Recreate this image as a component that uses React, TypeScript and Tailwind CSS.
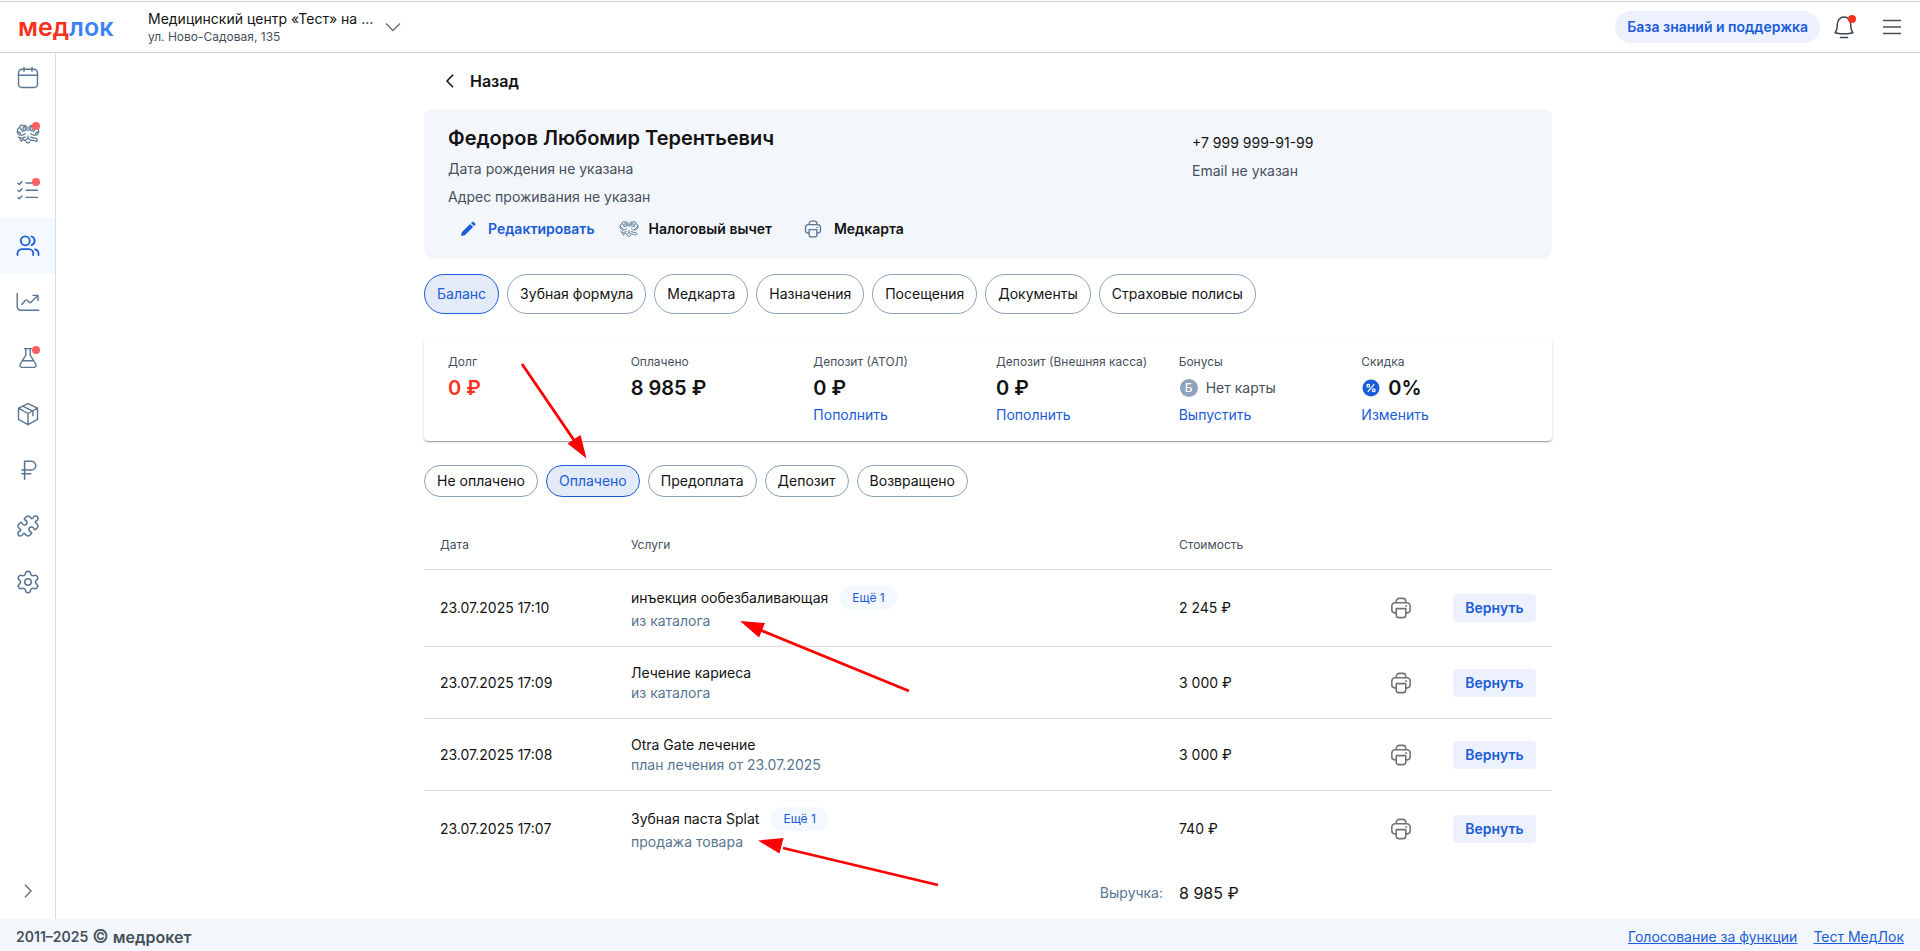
// src/App.tsx
// Patient card: personal data, balance summary and the list of payments.

import { useState, type ReactNode } from 'react'
import { Puzzle, Settings } from 'lucide-react'

function Icon({ children, className = 'size-6', width = 1.4 }: { children: ReactNode; className?: string; width?: number }) {
  return (
    <svg viewBox="0 0 24 24" fill="none" stroke="currentColor" strokeWidth={width} strokeLinecap="round" strokeLinejoin="round" className={className} aria-hidden="true">
      {children}
    </svg>
  )
}

const CalendarIcon = () => (
  <Icon>
    <rect x="2.5" y="3.2" width="19" height="18.3" rx="3.6" />
    <path d="M2.5 9.2h19M8 1.4v3.8M16 1.4v3.8" />
  </Icon>
)

const EagleIcon = ({ className }: { className?: string }) => (
  <Icon className={className} width={1.2}>
    <path d="M11 8.5V5.2L9.3 3.4 7.6 4.2l1.7 1.2v2.4c0 1.6-2.2 1.4-2.2-.2V5.4M13 8.5V5.2l1.7-1.8 1.7.8-1.7 1.2v2.4c0 1.6 2.2 1.4 2.2-.2V5.4" />
    <path d="M7.2 3.3C4.9 2.7 3 3.9 4 5.6l2.5 3.9M4 5.6C1.8 5.7 1 8 1.3 9.8c.4 2.7 2.7 3.8 5.2 3.3 1.2-.2 2-.6 2.8-1.4M1.5 9.2l3.2 2.3" />
    <path d="M16.8 3.3c2.3-.6 4.2.6 3.2 2.3l-2.5 3.9M20 5.6c2.2.1 3 2.4 2.7 4.2-.4 2.7-2.7 3.8-5.2 3.3-1.2-.2-2-.6-2.8-1.4M22.5 9.2l-3.2 2.3" />
    <path d="M12 13.800v2.400M9.200 15.200c-1.300-.2-1.900.8-3 .9-1.600.2-2.200-.8-3.900-.9M3.800 16.200l1.300 3.100 2.200-2.100 1.700 1.600M14.800 15.200c1.300-.2 1.900.8 3 .9 1.600.2 3-.3 3.600 1.500.3 1.300-1.400 2.300-2.300 1.300-.9-1-2.300-.1-3.900-.9M9.500 18.300c.9-1.300 1.800-1.200 2.500-2.100.7.900 1.600.8 2.500 2.100M10.200 19.800c.5 1.600 3.100 1.600 3.600 0" />
  </Icon>
)

const ChecklistIcon = () => (
  <Icon>
    <path d="M2 5.200l1.300 1.200L6 3.600M2 12.400l1.300 1.200L6 10.800M2 19.600l1.300 1.200L6 18M10 5h11.500M10 12.200h11.500M10 19.400h11.500" />
  </Icon>
)

const UsersIcon = () => (
  <Icon width={1.8}>
    <circle cx="9.3" cy="6.8" r="4.5" />
    <path d="M1.500 21v-1.600a4.300 4.300 0 0 1 4.300-4.300h7.100a4.300 4.300 0 0 1 4.300 4.300V21M15.500 2.500a4.500 4.500 0 0 1 0 8.600M19 15.300a4.300 4.300 0 0 1 3.500 4.200V21" />
  </Icon>
)

const ChartIcon = () => (
  <Icon>
    <path d="M1.200 3.500v13.300a3.400 3.400 0 0 0 3.400 3.400h18.200M5.800 14.500l3.700-4.200c.5-.5 1.200-.5 1.700 0l2.100 2c.5.500 1.200.5 1.700 0l6.500-6.500M17 5.400h5v5" />
  </Icon>
)

const FlaskIcon = () => (
  <Icon>
    <path d="M8.500 2.600h7M9.800 2.600v6.600L4.300 18c-1 1.700 0 3.400 1.800 3.400h11.800c1.800 0 2.800-1.700 1.800-3.400l-5.500-8.800V2.600M7 14.800h10" />
  </Icon>
)

const BoxIcon = () => (
  <Icon>
    <path d="M12 1.700l9.500 4.500v11.200L12 22.700l-9.500-5.300V6.200zM2.500 6.200L12 11.500l9.500-5.300M12 11.500v11.200M6.700 4.200l10.200 5v4.600" />
  </Icon>
)

const RubleIcon = () => (
  <Icon width={1.6}>
    <path d="M8.600 21.200V3.200h6.800a4.300 4.300 0 0 1 4.300 4.300v.2a4.300 4.300 0 0 1-4.300 4.300H5.800M5.800 15.800h9" />
  </Icon>
)

const PrinterIcon = ({ className }: { className?: string }) => (
  <Icon className={className} width={1.7}>
    <path d="M6.800 6.300V4.800A3.300 3.300 0 0 1 10.100 1.500h3.800a3.300 3.300 0 0 1 3.300 3.300v1.500M6.800 17.300H5.300A3.300 3.300 0 0 1 2 14V9.900a3.600 3.600 0 0 1 3.600-3.600h12.800A3.600 3.600 0 0 1 22 9.900V14a3.300 3.300 0 0 1-3.300 3.300h-1.500" />
    <path d="M6.800 12.700h10.400v6.800a3 3 0 0 1-3 3H9.800a3 3 0 0 1-3-3zM17.200 9.800h.8" />
  </Icon>
)

const menu = [
  { label: 'Расписание', icon: <CalendarIcon /> },
  { label: 'Налоговые вычеты', icon: <EagleIcon />, dot: true },
  { label: 'Задачи', icon: <ChecklistIcon />, dot: true },
  { label: 'Клиенты', icon: <UsersIcon />, active: true },
  { label: 'Отчёты', icon: <ChartIcon /> },
  { label: 'Лаборатория', icon: <FlaskIcon />, dot: true },
  { label: 'Склад', icon: <BoxIcon /> },
  { label: 'Касса', icon: <RubleIcon /> },
  { label: 'Интеграции', icon: <Puzzle size={24} strokeWidth={1.5} /> },
  { label: 'Настройки', icon: <Settings size={26} strokeWidth={1.4} /> },
]

const tabs = ['Баланс', 'Зубная формула', 'Медкарта', 'Назначения', 'Посещения', 'Документы', 'Страховые полисы']
const filters = ['Не оплачено', 'Оплачено', 'Предоплата', 'Депозит', 'Возвращено']

const payments = [
  { date: '23.07.2025 17:10', name: 'инъекция ообезбаливающая', more: 'Ещё 1', source: 'из каталога', price: '2 245 ₽' },
  { date: '23.07.2025 17:09', name: 'Лечение кариеса', source: 'из каталога', price: '3 000 ₽' },
  { date: '23.07.2025 17:08', name: 'Otra Gate лечение', source: 'план лечения от 23.07.2025', price: '3 000 ₽' },
  { date: '23.07.2025 17:07', name: 'Зубная паста Splat', more: 'Ещё 1', source: 'продажа товара', price: '740 ₽' },
]

function Header() {
  return (
    <header className="relative z-10 -mb-[3px] flex h-[53px] flex-col border-b border-[#c5cfe2] bg-white">
      <div className="mt-px h-px shrink-0 bg-[#d0c8c2]" />
      <div className="flex flex-1 items-center pr-4 pl-[18px]">
        <a href="#" className="w-[130px] text-[25px] leading-8 font-semibold text-[#f8301c]">
          мед<span className="text-[#3c82f6]">лок</span>
        </a>
        <button className="flex items-center gap-3 text-left">
          <span>
            <span className="block text-sm leading-5">Медицинский центр «Тест» на ...</span>
            <span className="block text-xs leading-4 text-[#46505c]">ул. Ново-Садовая, 135</span>
          </span>
          <svg viewBox="0 0 16 10" fill="none" stroke="#6b6f75" strokeWidth="1.4" className="h-2.5 w-4"><path d="M1 1.500l7 7 7-7" /></svg>
        </button>
        <div className="ml-auto flex items-center gap-3">
          <a href="#" className="flex h-8 items-center rounded-full bg-[#ecf1fd] px-3 text-sm font-semibold text-[#1b5cd7]">База знаний и поддержка</a>
          <button aria-label="Уведомления" className="relative size-6">
            <Icon width={1.5}>
              <path d="M3 17.500c2-2.200 2.300-4.500 2.300-8C5.300 5.300 8 2 12 2s6.700 3.300 6.700 7.500c0 3.500.3 5.800 2.300 8-3.500 1.800-14.500 1.800-18 0zM8.500 22.500h7" className="text-[#3c4753]" />
            </Icon>
            <span className="absolute top-0 right-0 size-2 rounded-full bg-[#f8301c]" />
          </button>
          <button aria-label="Меню" className="ml-3 size-6">
            <svg viewBox="0 0 24 24" stroke="#46505c" strokeWidth="1.4" className="size-6"><path d="M3 5.500h18M3 12h18M3 18.500h18" /></svg>
          </button>
        </div>
      </div>
    </header>
  )
}

function Sidebar() {
  return (
    <nav className="flex w-14 shrink-0 flex-col border-r border-[#d9dce2] text-[#587592]">
      {menu.map((m) => (
        <a key={m.label} href="#" aria-label={m.label} className={`flex h-14 items-center justify-center ${m.active ? 'bg-[#f4f8ff] text-[#1b5cd7]' : ''}`}>
          <span className="relative">
            {m.icon}
            {m.dot && <span className="absolute top-0 right-0 size-2 rounded-full bg-[#ff6161]" />}
          </span>
        </a>
      ))}
      <button aria-label="Развернуть" className="mt-auto flex h-14 items-center justify-center">
        <svg viewBox="0 0 8 14" fill="none" stroke="#687078" strokeWidth="1.5" className="h-3.5 w-2"><path d="M1 .8L7 7l-6 6.200" /></svg>
      </button>
    </nav>
  )
}

function Pill({ active, tall, onClick, children }: { active: boolean; tall?: boolean; onClick: () => void; children: ReactNode }) {
  return (
    <button
      onClick={onClick}
      className={`rounded-full border px-3 text-sm ${tall ? 'h-10' : 'h-8'} ${active ? 'border-[#1b5cd7] bg-[#e3eaf8] text-[#1b5cd7]' : 'border-[#8da2bd]'}`}
    >
      {children}
    </button>
  )
}

function PatientCard() {
  return (
    <section className="flex rounded-lg bg-[#f3f6fb] px-6 pt-[15px] pb-[13px]">
      <div className="flex-1">
        <h1 className="mb-[3px] text-xl leading-7 font-semibold">Федоров Любомир Терентьевич</h1>
        <p className="text-sm leading-7 text-[#46505c]">Дата рождения не указана</p>
        <p className="text-sm leading-7 text-[#46505c]">Адрес проживания не указан</p>
        <div className="mt-0.5 flex h-8 items-center text-sm font-semibold">
          <button className="flex items-center gap-3 pl-3 text-[#1b5cd7]">
            <svg viewBox="0 0 16 16" fill="currentColor" className="size-4"><path d="M1 15l.8-3.700 8.300-8.300 3 3-8.300 8.200zM11 2.100l1.100-1.100c.5-.5 1.100-.5 1.500 0l1.500 1.500c.5.5.5 1.100 0 1.500L14 5.100z" /></svg>
            Редактировать
          </button>
          <button className="ml-6 flex items-center gap-2.5">
            <EagleIcon className="size-5 text-[#587592]" />
            Налоговый вычет
          </button>
          <button className="ml-8 flex items-center gap-3">
            <PrinterIcon className="size-[18px] text-[#587592]" />
            Медкарта
          </button>
        </div>
      </div>
      <div className="w-[336px] pt-[5px] text-sm leading-7">
        <p>+7 999 999-91-99</p>
        <p className="text-[#46505c]">Email не указан</p>
      </div>
    </section>
  )
}

function Stat({ label, action, children }: { label: string; action?: string; children: ReactNode }) {
  return (
    <div>
      <p className="text-xs leading-4 text-[#46505c]">{label}</p>
      <div className="mt-1 flex h-7 items-center text-xl font-semibold">{children}</div>
      {action && <button className="mt-[3px] block text-sm leading-5 text-[#1b5cd7]">{action}</button>}
    </div>
  )
}

function Balance() {
  return (
    <section className="mt-6 grid grid-cols-6 rounded pt-4 pr-2 pb-4 pl-6 shadow-[0_2px_1px_-1px_rgba(0,0,0,0.2),0_1px_1px_0_rgba(0,0,0,0.14),0_1px_3px_0_rgba(0,0,0,0.12)]">
      <Stat label="Долг"><span className="text-[#f8301c]">0 ₽</span></Stat>
      <Stat label="Оплачено">8 985 ₽</Stat>
      <Stat label="Депозит (АТОЛ)" action="Пополнить">0 ₽</Stat>
      <Stat label="Депозит (Внешняя касса)" action="Пополнить">0 ₽</Stat>
      <Stat label="Бонусы" action="Выпустить">
        <span className="ml-px flex size-[18px] items-center justify-center rounded-full bg-[#8da2bd] text-xs font-medium text-white">Б</span>
        <span className="ml-2 text-sm font-normal text-[#46505c]">Нет карты</span>
      </Stat>
      <Stat label="Скидка" action="Изменить">
        <svg viewBox="0 0 18 18" className="mr-2 ml-px size-[18px]">
          <circle cx="9" cy="9" r="8.5" fill="#1b5cd7" />
          <g fill="none" stroke="#fff" strokeWidth="1.2"><path d="M12.300 5.200l-6.600 7.600" /><circle cx="6.3" cy="6.8" r="1.4" /><circle cx="11.7" cy="11.2" r="1.4" /></g>
        </svg>
        0%
      </Stat>
    </section>
  )
}

function Payments() {
  return (
    <table className="mt-6 w-full table-fixed border-separate border-spacing-0 text-sm">
      <colgroup>
        <col className="w-[191px]" />
        <col />
        <col className="w-[202px]" />
        <col className="w-[72px]" />
        <col className="w-[115px]" />
      </colgroup>
      <thead>
        <tr className="text-left text-xs text-[#46505c] [&>*]:h-[49px] [&>*]:border-b [&>*]:border-[#dedede] [&>*]:px-4 [&>*]:font-normal">
          <th>Дата</th>
          <th>Услуги</th>
          <th>Стоимость</th>
          <td />
          <td />
        </tr>
      </thead>
      <tbody>
        {payments.map((p) => (
          <tr key={p.date} className="[&>td]:border-[#dedede] [&>td]:px-4 not-last:[&>td]:border-b">
            <td>{p.date}</td>
            <td className="pt-4 pb-[15px]">
              <div className={`flex items-center gap-3 leading-5 ${p.more ? 'mb-px' : ''}`}>
                {p.name}
                {p.more && <button className="h-6 rounded-full bg-[#f4f8ff] px-3 text-xs text-[#1b5cd7]">{p.more}</button>}
              </div>
              <p className="leading-5 text-[#587592]">{p.source}</p>
            </td>
            <td>{p.price}</td>
            <td>
              <button aria-label="Печать" className="mx-auto block w-[22px] text-[#6f7276]"><PrinterIcon className="size-[22px]" /></button>
            </td>
            <td>
              <button className="h-7 w-full rounded bg-[#ecf1fd] font-semibold text-[#1b5cd7]">Вернуть</button>
            </td>
          </tr>
        ))}
      </tbody>
      <tfoot>
        <tr>
          <td colSpan={2} className="h-[52px] text-right text-[#587592]">Выручка:</td>
          <td className="px-4 text-base">8 985 ₽</td>
          <td colSpan={2} />
        </tr>
      </tfoot>
    </table>
  )
}

// Hint arrows laid over the page
function Arrows() {
  return (
    <svg viewBox="0 0 1128 869" className="pointer-events-none absolute top-0 left-0 h-[869px] w-[1128px]" stroke="#f00" strokeWidth="2.8" fill="#f00" aria-hidden="true">
      <path d="M98 314l56 82M485 641L336 580M514 835l-155-37" />
      <path stroke="none" d="M162.500 408.500L143.500 393.500l13-8.500zM316 571l25 2-6 14.500zM334 790.500l25.500-2.500-4 15.500z" />
    </svg>
  )
}

export default function App() {
  const [tab, setTab] = useState('Баланс')
  const [filter, setFilter] = useState('Оплачено')

  return (
    <div className="flex min-h-screen flex-col bg-white font-['Inter',sans-serif] text-[#131313]">
      <Header />
      <div className="flex flex-1">
        <Sidebar />
        <main className="min-w-0 flex-1">
          <div className="relative mx-auto max-w-[1128px] pt-[15px]">
            <button className="mb-3 flex h-8 items-center gap-4 pl-[22px] font-semibold">
              <svg viewBox="0 0 8 14" fill="none" stroke="currentColor" strokeWidth="1.6" className="h-3.5 w-2"><path d="M7 .8L1 7l6 6.200" /></svg>
              Назад
            </button>
            <PatientCard />
            <div className="mt-4 flex gap-2">
              {tabs.map((t) => <Pill key={t} tall active={t === tab} onClick={() => setTab(t)}>{t}</Pill>)}
            </div>
            <Balance />
            <div className="mt-6 flex gap-2">
              {filters.map((f) => <Pill key={f} active={f === filter} onClick={() => setFilter(f)}>{f}</Pill>)}
            </div>
            <Payments />
            <Arrows />
          </div>
        </main>
      </div>
      <footer className="flex h-8 items-center gap-4 bg-[#f3f6fb] px-4 pt-1 text-sm text-[#1b5cd7]">
        <p className="mr-auto flex items-center gap-1 font-semibold text-[#46505c]">
          2011–2025 <span className="text-lg leading-5 font-medium">©</span> <span className="text-base leading-5">медрокет</span>
        </p>
        <a href="#" className="underline">Голосование за функции</a>
        <a href="#" className="underline">Тест МедЛок</a>
      </footer>
    </div>
  )
}
